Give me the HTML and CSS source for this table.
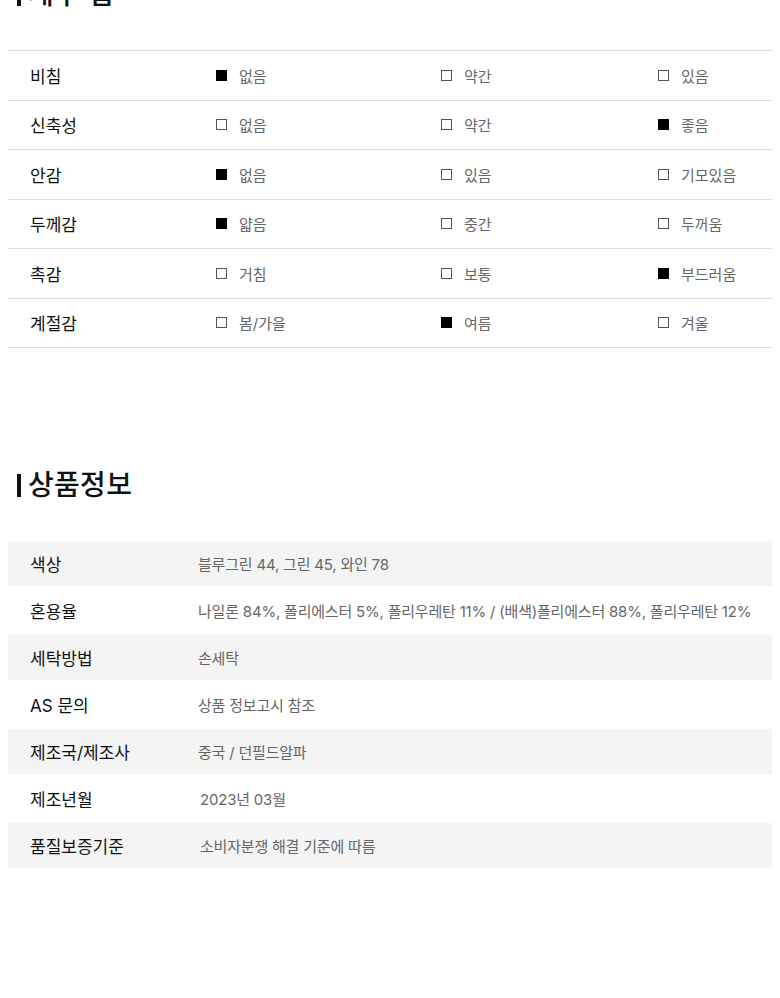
FILE: index.html
```html
<!DOCTYPE html>
<html lang="ko">
<head>
<meta charset="utf-8">
<title>상품정보</title>
<link rel="stylesheet" href="styles.css">
</head>
<body>
<div class="page">
  <section class="section section-first">
    <h2 class="heading">세부 팁</h2>
    <div class="tips">
      <div class="tip-row">
        <div class="tip-label">비침</div>
        <div class="opt"><span class="box on"></span>없음</div>
        <div class="opt"><span class="box"></span>약간</div>
        <div class="opt"><span class="box"></span>있음</div>
      </div>
      <div class="tip-row">
        <div class="tip-label">신축성</div>
        <div class="opt"><span class="box"></span>없음</div>
        <div class="opt"><span class="box"></span>약간</div>
        <div class="opt"><span class="box on"></span>좋음</div>
      </div>
      <div class="tip-row">
        <div class="tip-label">안감</div>
        <div class="opt"><span class="box on"></span>없음</div>
        <div class="opt"><span class="box"></span>있음</div>
        <div class="opt"><span class="box"></span>기모있음</div>
      </div>
      <div class="tip-row">
        <div class="tip-label">두께감</div>
        <div class="opt"><span class="box on"></span>얇음</div>
        <div class="opt"><span class="box"></span>중간</div>
        <div class="opt"><span class="box"></span>두꺼움</div>
      </div>
      <div class="tip-row">
        <div class="tip-label">촉감</div>
        <div class="opt"><span class="box"></span>거침</div>
        <div class="opt"><span class="box"></span>보통</div>
        <div class="opt"><span class="box on"></span>부드러움</div>
      </div>
      <div class="tip-row">
        <div class="tip-label">계절감</div>
        <div class="opt"><span class="box"></span>봄/가을</div>
        <div class="opt"><span class="box on"></span>여름</div>
        <div class="opt"><span class="box"></span>겨울</div>
      </div>
    </div>
  </section>

  <section class="section section-info">
    <h2 class="heading">상품정보</h2>
    <div class="info">
      <div class="info-row shade"><div class="info-label">색상</div><div class="info-value">블루그린 44, 그린 45, 와인 78</div></div>
      <div class="info-row"><div class="info-label">혼용율</div><div class="info-value">나일론 84%, 폴리에스터 5%, 폴리우레탄 11% / (배색)폴리에스터 88%, 폴리우레탄 12%</div></div>
      <div class="info-row shade"><div class="info-label">세탁방법</div><div class="info-value">손세탁</div></div>
      <div class="info-row"><div class="info-label">AS 문의</div><div class="info-value">상품 정보고시 참조</div></div>
      <div class="info-row shade"><div class="info-label">제조국/제조사</div><div class="info-value">중국 / 던필드알파</div></div>
      <div class="info-row"><div class="info-label">제조년월</div><div class="info-value indent">2023년 03월</div></div>
      <div class="info-row shade"><div class="info-label">품질보증기준</div><div class="info-value indent">소비자분쟁 해결 기준에 따름</div></div>
    </div>
  </section>
</div>
</body>
</html>
```

FILE: styles.css
```css
* { box-sizing: border-box; }

html, body {
  margin: 0;
  padding: 0;
  background: #fff;
}

body {
  font-family: Inter, "Noto Sans CJK KR", sans-serif;
  color: #111;
  overflow: hidden;
}

.page {
  padding: 0 8px;
}

.section-first {
  margin-top: -26px;
}

.section-info {
  margin-top: 117px;
}

.heading {
  display: flex;
  align-items: center;
  gap: 7px;
  height: 40px;
  margin: 0 0 36px 9px;
  font-size: 28px;
  font-weight: 500;
  line-height: 40px;
  color: #111;
  letter-spacing: 0.3px;
}

.heading::before {
  content: "";
  width: 4px;
  height: 23px;
  background: #111;
}

.tips {
  border-top: 1px solid #dcdcdc;
}

.tip-row {
  display: grid;
  grid-template-columns: 208px 225px 217px 1fr;
  align-items: center;
  height: 49.5px;
  border-bottom: 1px solid #dcdcdc;
}

.tip-label {
  padding-left: 22px;
  font-size: 17px;
  color: #111;
}

.opt {
  display: flex;
  align-items: center;
  gap: 12px;
  font-size: 15px;
  color: #666;
}

.box {
  width: 11px;
  height: 11px;
  border: 1px solid #555;
  background: #fff;
}

.box.on {
  background: #000;
  border-color: #000;
}

.info-row {
  display: grid;
  grid-template-columns: 190px 1fr;
  align-items: center;
  height: 49px;
}

.info-row.shade {
  height: 45px;
  background: #f4f4f4;
}

.info-label {
  padding-left: 22px;
  font-size: 17px;
  color: #111;
}

.info-value {
  font-size: 15px;
  color: #666;
  letter-spacing: -0.2px;
  white-space: nowrap;
}

.info-value.indent {
  padding-left: 2px;
}
```
